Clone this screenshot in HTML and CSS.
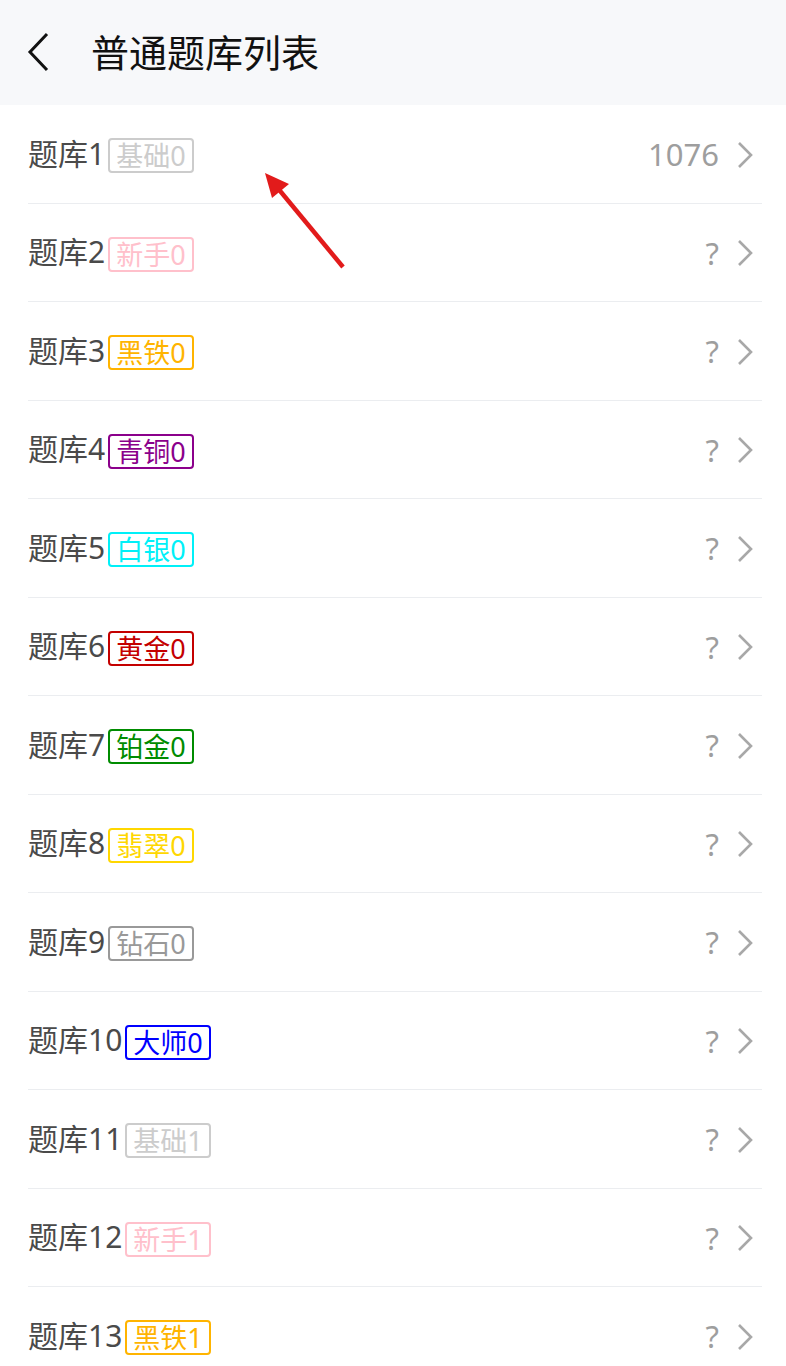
FILE: index.html
```html
<!DOCTYPE html>
<html lang="zh-CN">
	<head>
		<meta charset="UTF-8" />
		<meta name="viewport" content="width=device-width, initial-scale=1.0" />
		<title>普通题库列表</title>

		<link rel="stylesheet" href="styles.css">
	</head>

	<body>
		<!-- Top bar -->
		<div class="navBar">
			<svg class="backIcon" width="24" height="40" viewBox="0 0 24 40">
				<polyline points="20,2 3,20 20,38" fill="none" stroke="#111" stroke-width="3" />
			</svg>
			<div class="navTitle">普通题库列表</div>
		</div>

		<!-- Bank list -->
		<div class="bankList">
			<div class="bankRow">
				<span class="bankName">题库1</span><span class="tag tag-jichu">基础0</span>
				<span class="bankCount">1076</span>
				<svg class="chevron" width="18" height="28" viewBox="0 0 18 28"><polyline points="3,2 15,14 3,26" /></svg>
			</div>
			<div class="bankRow">
				<span class="bankName">题库2</span><span class="tag tag-xinshou">新手0</span>
				<span class="bankCount">?</span>
				<svg class="chevron" width="18" height="28" viewBox="0 0 18 28"><polyline points="3,2 15,14 3,26" /></svg>
			</div>
			<div class="bankRow">
				<span class="bankName">题库3</span><span class="tag tag-heitie">黑铁0</span>
				<span class="bankCount">?</span>
				<svg class="chevron" width="18" height="28" viewBox="0 0 18 28"><polyline points="3,2 15,14 3,26" /></svg>
			</div>
			<div class="bankRow">
				<span class="bankName">题库4</span><span class="tag tag-qingtong">青铜0</span>
				<span class="bankCount">?</span>
				<svg class="chevron" width="18" height="28" viewBox="0 0 18 28"><polyline points="3,2 15,14 3,26" /></svg>
			</div>
			<div class="bankRow">
				<span class="bankName">题库5</span><span class="tag tag-baiyin">白银0</span>
				<span class="bankCount">?</span>
				<svg class="chevron" width="18" height="28" viewBox="0 0 18 28"><polyline points="3,2 15,14 3,26" /></svg>
			</div>
			<div class="bankRow">
				<span class="bankName">题库6</span><span class="tag tag-huangjin">黄金0</span>
				<span class="bankCount">?</span>
				<svg class="chevron" width="18" height="28" viewBox="0 0 18 28"><polyline points="3,2 15,14 3,26" /></svg>
			</div>
			<div class="bankRow">
				<span class="bankName">题库7</span><span class="tag tag-bojin">铂金0</span>
				<span class="bankCount">?</span>
				<svg class="chevron" width="18" height="28" viewBox="0 0 18 28"><polyline points="3,2 15,14 3,26" /></svg>
			</div>
			<div class="bankRow">
				<span class="bankName">题库8</span><span class="tag tag-feicui">翡翠0</span>
				<span class="bankCount">?</span>
				<svg class="chevron" width="18" height="28" viewBox="0 0 18 28"><polyline points="3,2 15,14 3,26" /></svg>
			</div>
			<div class="bankRow">
				<span class="bankName">题库9</span><span class="tag tag-zuanshi">钻石0</span>
				<span class="bankCount">?</span>
				<svg class="chevron" width="18" height="28" viewBox="0 0 18 28"><polyline points="3,2 15,14 3,26" /></svg>
			</div>
			<div class="bankRow">
				<span class="bankName">题库10</span><span class="tag tag-dashi">大师0</span>
				<span class="bankCount">?</span>
				<svg class="chevron" width="18" height="28" viewBox="0 0 18 28"><polyline points="3,2 15,14 3,26" /></svg>
			</div>
			<div class="bankRow">
				<span class="bankName">题库11</span><span class="tag tag-jichu">基础1</span>
				<span class="bankCount">?</span>
				<svg class="chevron" width="18" height="28" viewBox="0 0 18 28"><polyline points="3,2 15,14 3,26" /></svg>
			</div>
			<div class="bankRow">
				<span class="bankName">题库12</span><span class="tag tag-xinshou">新手1</span>
				<span class="bankCount">?</span>
				<svg class="chevron" width="18" height="28" viewBox="0 0 18 28"><polyline points="3,2 15,14 3,26" /></svg>
			</div>
			<div class="bankRow">
				<span class="bankName">题库13</span><span class="tag tag-heitie">黑铁1</span>
				<span class="bankCount">?</span>
				<svg class="chevron" width="18" height="28" viewBox="0 0 18 28"><polyline points="3,2 15,14 3,26" /></svg>
			</div>
		</div>

		<!-- Red annotation arrow drawn over the list -->
		<svg class="pointer" width="120" height="120" viewBox="0 0 120 120">
			<line x1="97" y1="101" x2="30" y2="20" stroke="#e21b1b" stroke-width="4.5" />
			<polygon points="19,7 43,18 26,32" fill="#e21b1b" />
		</svg>
	</body>
</html>
```

FILE: styles.css
```css
body {
	margin: 0;
	background: #fff;
	font-family: "Noto Sans", "Noto Sans CJK SC", sans-serif;
	overflow: hidden;
}

.navBar {
	height: 105px;
	background-color: #f7f8fa;
	display: flex;
	align-items: center;
	padding-left: 27px;
}

.backIcon {
	display: block;
	margin-top: -2px;
}

.navTitle {
	margin-left: 40px;
	font-size: 38px;
	color: #111;
	line-height: 1;
	margin-top: -2px;
}

.bankList {
	padding: 0 24px 0 28px;
}

.bankRow {
	height: 98.5px;
	box-sizing: border-box;
	border-bottom: 1px solid #ebedf0;
	display: flex;
	align-items: center;
}

.bankName {
	font-size: 30px;
	color: #4a4a4a;
	line-height: 1;
}

.tag {
	margin-left: 3px;
	font-size: 27px;
	line-height: 31px;
	padding: 0 6px;
	border: 2px solid;
	border-radius: 4px;
	margin-top: 4px;
}

.tag-jichu { color: #cccccc; }
.tag-xinshou { color: #ffc0cb; }
.tag-heitie { color: #ffb400; }
.tag-qingtong { color: #8b008b; }
.tag-baiyin { color: #00f0f8; }
.tag-huangjin { color: #c40000; }
.tag-bojin { color: #008c00; }
.tag-feicui { color: #ffd700; }
.tag-zuanshi { color: #999999; }
.tag-dashi { color: #0000ff; }

.bankCount {
	margin-left: auto;
	font-size: 31px;
	color: #9e9e9e;
	line-height: 1;
	margin-top: 2px;
}

.chevron {
	display: block;
	margin-left: 17px;
	margin-right: 8px;
	margin-top: 2px;
}

.chevron polyline {
	fill: none;
	stroke: #a8a8a8;
	stroke-width: 2.6;
}

.pointer {
	position: absolute;
	left: 246px;
	top: 166px;
}
```
